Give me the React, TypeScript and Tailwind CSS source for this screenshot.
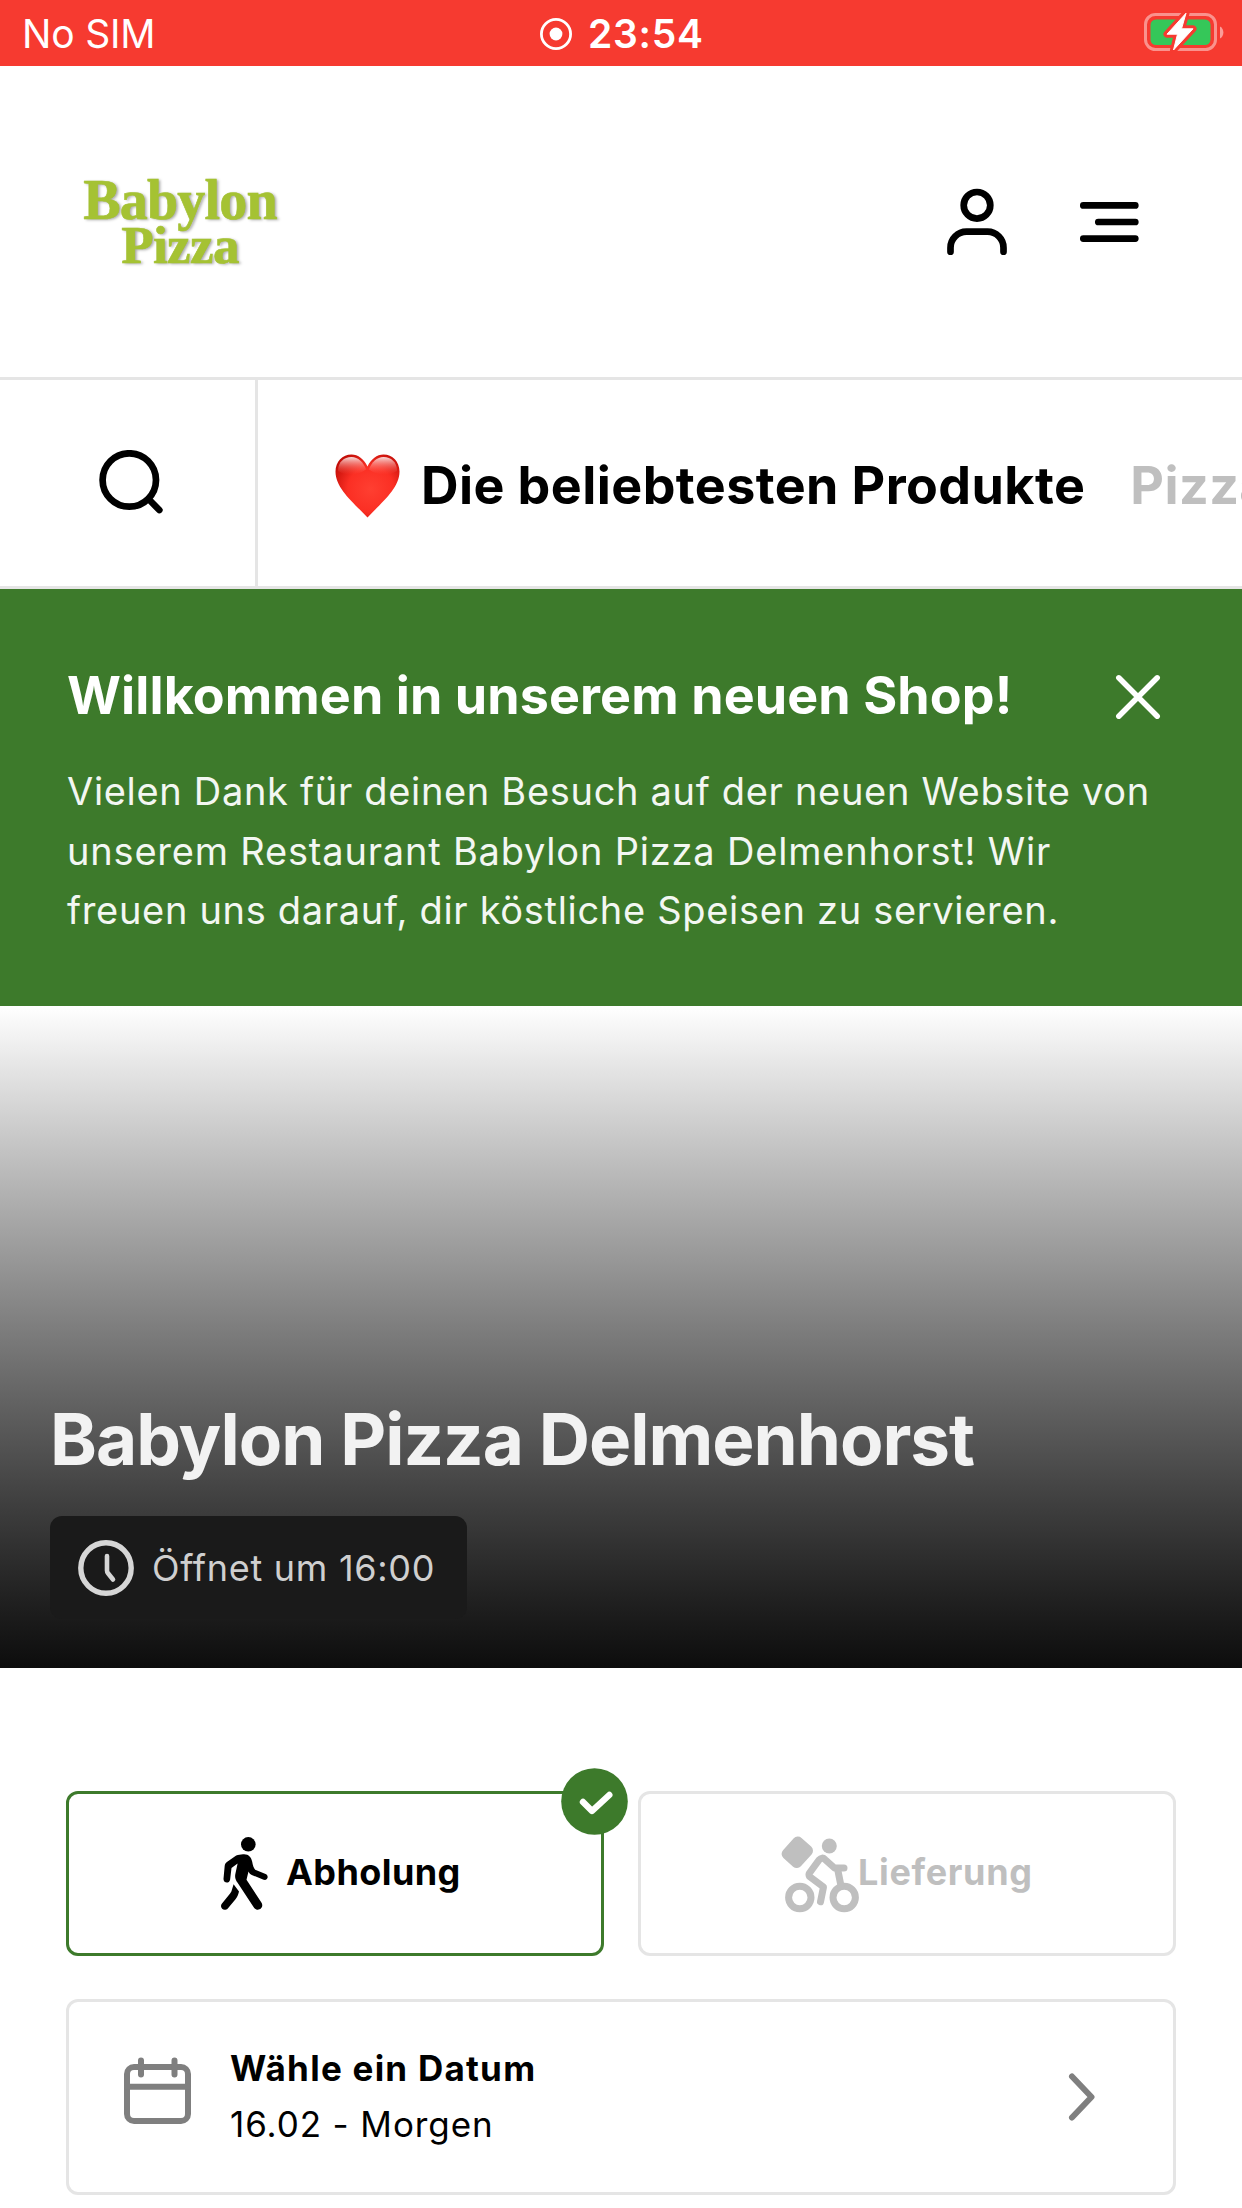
import type { ReactNode } from "react";

function StatusBar() {
  return (
    <div className="flex h-[66px] items-start bg-[#f63a30] text-[39px] leading-[68px] text-white">
      <div className="w-[540px] pl-[22px] tracking-[-0.2px]">No SIM</div>
      <svg className="mt-[18px] size-8" viewBox="0 0 32 32" fill="none">
        <circle cx="16" cy="16" r="14.6" stroke="#fff" strokeWidth="2.8" />
        <circle cx="16" cy="16" r="6.4" fill="#fff" />
      </svg>
      <div className="ml-[16px] font-semibold tracking-[0.73px]">23:54</div>
      <svg className="mt-[11px] mr-[18px] ml-auto h-[42px] w-[80px]" viewBox="0 0 80 42" fill="none">
        <rect x="1.5" y="3.5" width="70" height="35" rx="10" stroke="#fff" strokeOpacity="0.45" strokeWidth="3" />
        <rect x="6.500" y="8.500" width="60" height="25.500" rx="5.500" fill="#35c759" />
        <path d="M76 15.500c4.500 2 4.500 10 0 12z" fill="#fff" fillOpacity="0.5" />
        <path
          d="M42 2.200 23 23.200h10.500L29.500 39 49 17.800H37.500z"
          fill="#fff"
          stroke="#f63a30"
          strokeWidth="7"
          strokeLinejoin="round"
        />
        <path d="M42 2.200 23 23.200h10.500L29.500 39 49 17.800H37.500z" fill="#fff" stroke="#fff" strokeLinejoin="round" />
      </svg>
    </div>
  );
}

function Header() {
  return (
    <header className="flex h-[314px] items-center justify-between border-b-[3px] border-[#e5e5e5] pr-[103px] pl-[81px]">
      <div className="w-[198px] text-center font-['Liberation_Serif',serif] font-bold text-[#a5c233] [text-shadow:2px_1px_3px_rgba(0,0,0,0.35)] [-webkit-text-stroke:0.6px_#a5c233]">
        <div className="text-[56px] leading-[46px] tracking-[-0.8px]">Babylon</div>
        <div className="text-[53px] leading-[44px] tracking-[-0.6px]">Pizza</div>
      </div>
      <div className="flex items-center gap-[71px]">
        <svg className="size-[62px] overflow-visible" viewBox="0 0 62 62" fill="none" stroke="#000" strokeWidth="6.700" strokeLinecap="round">
          <circle cx="31" cy="14.300" r="13.300" />
          <path d="M4.500 60.700v-4a16 16 0 0 1 16-16h21a16 16 0 0 1 16 16v4" />
        </svg>
        <svg className="h-[40px] w-[60px]" viewBox="0 0 60 40" fill="none" stroke="#000" strokeWidth="6.700" strokeLinecap="round">
          <path d="M4.300 3.400h52M19.300 20h37M4.300 36.600h52" />
        </svg>
      </div>
    </header>
  );
}

function CategoryBar() {
  return (
    <nav className="flex h-[209px] overflow-hidden border-b-[3px] border-[#e5e5e5]">
      <div className="w-[258px] shrink-0 border-r-[3px] border-[#e5e5e5] pt-[70px] pl-[99px]">
        <svg className="size-[66px]" viewBox="0 0 66 66" fill="none" stroke="#000" strokeWidth="6.700" strokeLinecap="round">
          <circle cx="30.300" cy="30" r="26.700" />
          <path d="m50 49.500 10.300 10.500" />
        </svg>
      </div>
      <div className="flex shrink-0 items-start pl-[77px] text-[52px] leading-[60px] font-bold whitespace-nowrap">
        <svg className="mt-[74px] h-[64px] w-[65px]" viewBox="0 0 65 64">
          <defs>
            <radialGradient id="heartFill" cx="0.55" cy="0.550" r="0.65">
              <stop offset="0" stopColor="#ff3f31" />
              <stop offset="0.55" stopColor="#fb2f24" />
              <stop offset="1" stopColor="#c20d07" />
            </radialGradient>
            <linearGradient id="heartShine" x1="0" y1="0" x2="0" y2="1">
              <stop offset="0" stopColor="#fff" stopOpacity="0.85" />
              <stop offset="1" stopColor="#ff5b4f" stopOpacity="0" />
            </linearGradient>
          </defs>
          <path
            d="M32.500 12.500C29 5 23 .5 16.500.5 7.500.5.5 7.500.5 17.500c0 17 18 31 32 46 14-15 32-29 32-46C64.500 7.500 57.500.5 48.500.5 42 .5 36 5 32.500 12.500z"
            fill="url(#heartFill)"
          />
          <path d="M3 17C3 8 9 3 16.500 3 23 3 28.500 8 31 15.500c-8 6-20 7-28 1.500z" fill="url(#heartShine)" />
          <path d="M62 17C62 8 56 3 48.500 3 42 3 36.500 8 34 15.500c8 6 20 7 28 1.500z" fill="url(#heartShine)" />
        </svg>
        <span className="mt-[76px] ml-[21px] tracking-[0.42px] text-black">Die beliebtesten Produkte</span>
        <span className="mt-[76px] ml-[45px] tracking-[0.42px] text-[#bfbfbf]">Pizza</span>
      </div>
    </nav>
  );
}

function WelcomeBanner() {
  return (
    <section className="h-[417px] bg-[#3d7a2b] pt-[76px] pl-[67px] text-white">
      <div className="flex justify-between pr-[81px]">
        <h2 className="text-[52px] leading-[62px] font-bold tracking-[0.1px]">Willkommen in unserem neuen Shop!</h2>
        <svg className="mt-[9px] size-[46px]" viewBox="0 0 46 46" fill="none" stroke="#fff" strokeWidth="5.500" strokeLinecap="round">
          <path d="m3.800 3.800 38.400 38.400M42.200 3.800 3.800 42.200" />
        </svg>
      </div>
      <p className="mt-[35px] text-[38px] leading-[59.600px] tracking-[0.68px] whitespace-nowrap text-[#f3f7f2]">
        Vielen Dank für deinen Besuch auf der neuen Website von
        <br />
        <span className="tracking-[0.8px]">unserem Restaurant Babylon Pizza Delmenhorst! Wir</span>
        <br />
        freuen uns darauf, dir köstliche Speisen zu servieren.
      </p>
    </section>
  );
}

function Hero() {
  return (
    <section className="flex h-[662px] flex-col items-start justify-end bg-linear-to-b from-white to-[#0d0d0d] pb-[49px] pl-[50px]">
      <h1 className="text-[71px] leading-[86px] font-bold tracking-[-1.02px] text-[#f2f2f2]">Babylon Pizza Delmenhorst</h1>
      <div className="mt-[34px] flex h-[103px] w-[417px] items-center rounded-[12px] bg-[#1a1a1a] pl-[28px] text-[#cfcfcf]">
        <svg className="size-[56px]" viewBox="0 0 56 56" fill="none" stroke="#d6d6d6" strokeLinecap="round" strokeLinejoin="round">
          <circle cx="28" cy="28" r="25.200" strokeWidth="5.400" />
          <path d="M29 16v14.500q0 1.500 1 2.700l5 6.300" strokeWidth="4.600" />
        </svg>
        <span className="ml-[18px] text-[36px] tracking-[0.7px]">Öffnet um 16:00</span>
      </div>
    </section>
  );
}

function WalkIcon() {
  return (
    <svg className="h-[74px] w-[47px]" viewBox="0 0 47 74" fill="#000">
      <circle cx="27.300" cy="7.300" r="7.300" />
      <path d="M22 17.300c5.500-.5 8.300 2.800 9.200 7.500.6 3.700 1.500 6.200 3 8l10.400 4.100c3.700 1.800 2.100 6.900-2 5.900l-11.800-4.900c-1.800-.8-2.700-1.900-3.300-3.500l-2 8.300 15.200 23.300c2.500 4.900-3.800 9.200-7.500 4.900L16.600 45.800c-2-2.800-2.900-5.300-2.300-8.500l2.300-10.900-6.100 4.500-1.400 11.800c-1 4.400-6.800 3.600-6.600-.9l1.200-13c.3-1.700 1-2.700 2.200-3.700l9.300-6.600c2.200-.7 4.200-1.100 6.800-1.200z" />
      <path d="M12.600 47.300 18 54.500c-.8 3.200-1.600 5.300-3.500 7.700l-7.700 9.200c-3.700 3.700-8.800-.6-6-4.700l8.300-10.200c1-1.300 1.500-2.400 1.800-3.800z" />
    </svg>
  );
}

function BikeIcon() {
  return (
    <svg className="h-[78px] w-[78px]" viewBox="0 0 78 78" fill="none" stroke="#bfbfbf" strokeLinecap="round" strokeLinejoin="round">
      <rect x="4.300" y="3.800" width="24" height="27" rx="5.500" transform="rotate(42 16.300 17.300)" fill="#bfbfbf" stroke="none" />
      <circle cx="48.300" cy="11" r="7.500" fill="#bfbfbf" stroke="none" />
      <g strokeWidth="7">
        <circle cx="18.800" cy="62.500" r="11.200" />
        <circle cx="63.200" cy="62.500" r="11.200" />
        <path d="M39.500 66.800 42.500 52 28.500 41.500Q27.500 39.500 28.500 38L38 25q3-3.500 6-.500L53.500 33H63" />
        <path d="M56.500 33.500 60 51" />
      </g>
    </svg>
  );
}

function ModeButton({ selected, children }: { selected?: boolean; children: ReactNode }) {
  return (
    <button
      className={
        selected
          ? "relative flex h-[165px] w-[538px] items-center rounded-[12px] border-[3px] border-[#3d7a2b] text-[36px] font-bold text-black"
          : "flex h-[165px] w-[538px] items-center rounded-[12px] border-[3px] border-[#e5e5e5] text-[36px] font-bold text-[#bfbfbf]"
      }
    >
      {children}
      {selected && (
        <svg className="absolute -top-[26px] -right-[27px] size-[67px]" viewBox="0 0 67 67" fill="none">
          <circle cx="33.500" cy="33.500" r="33.300" fill="#3d7a2b" />
          <path d="m22 34 9 9 17.300-16" stroke="#fff" strokeWidth="6.400" strokeLinecap="round" strokeLinejoin="round" />
        </svg>
      )}
    </button>
  );
}

function OrderOptions() {
  return (
    <main className="px-[66px] pt-[123px]">
      <div className="flex justify-between">
        <ModeButton selected>
          <span className="ml-[152px] flex items-center">
            <WalkIcon />
            <span className="ml-[18px] -mt-[3px] tracking-[0.42px]">Abholung</span>
          </span>
        </ModeButton>
        <ModeButton>
          <span className="ml-[140px] flex items-center">
            <BikeIcon />
            <span className="-mt-[3px] -ml-[1px] tracking-[0.650px]">Lieferung</span>
          </span>
        </ModeButton>
      </div>
      <div className="mt-[43px] flex h-[196px] items-center rounded-[12px] border-[3px] border-[#e5e5e5] pr-[76px] pl-[55px]">
        <svg className="-mt-[13px] h-[68px] w-[67px]" viewBox="0 0 67 68" fill="none" stroke="#7f7f7f" strokeWidth="6" strokeLinecap="round">
          <rect x="3" y="10" width="61" height="54" rx="7" />
          <path d="M3 29.800h61M17 3.500v14M50.500 3.500v14" />
        </svg>
        <div className="-mt-[2px] ml-[39px] text-[35px] leading-[56px] text-black">
          <div className="font-bold tracking-[1.250px]">Wähle ein Datum</div>
          <div className="tracking-[0.900px]">16.02 - Morgen</div>
        </div>
        <svg className="ml-auto h-[50px] w-[30px]" viewBox="0 0 30 50" fill="none" stroke="#7f7f7f" strokeWidth="6" strokeLinecap="round" strokeLinejoin="round">
          <path d="m5 4.500 19.500 20.500L5 45.500" />
        </svg>
      </div>
    </main>
  );
}

export default function App() {
  return (
    <div className="h-[2208px] w-[1242px] overflow-hidden bg-white font-['Inter',sans-serif]">
      <StatusBar />
      <Header />
      <CategoryBar />
      <WelcomeBanner />
      <Hero />
      <OrderOptions />
    </div>
  );
}
